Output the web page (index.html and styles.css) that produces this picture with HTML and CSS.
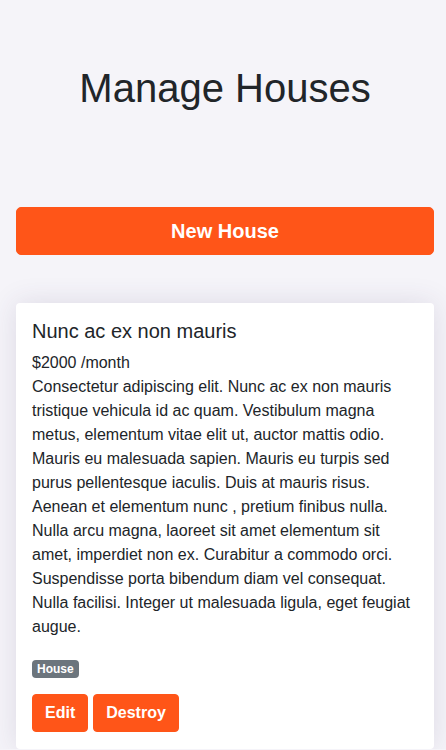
FILE: index.html
```html
<!DOCTYPE html>
<html>
<head>
<meta charset="utf-8">
<link rel="stylesheet" href="styles.css">
</head>
<body>
<main class="page">
  <h1 class="page-title">Manage Houses</h1>
  <a class="btn btn-lg btn-block" href="#">New House</a>
  <div class="card">
    <h5 class="card-title">Nunc ac ex non mauris</h5>
    <p class="card-text">$2000 /month<br>Consectetur adipiscing elit. Nunc ac ex non mauris tristique vehicula id ac quam. Vestibulum magna metus, elementum vitae elit ut, auctor mattis odio. Mauris eu malesuada sapien. Mauris eu turpis sed purus pellentesque iaculis. Duis at mauris risus. Aenean et elementum nunc , pretium finibus nulla. Nulla arcu magna, laoreet sit amet elementum sit amet, imperdiet non ex. Curabitur a commodo orci. Suspendisse porta bibendum diam vel consequat. Nulla facilisi. Integer ut malesuada ligula, eget feugiat augue.</p>
    <div class="tags"><span class="badge">House</span></div>
    <div class="actions">
      <a class="btn" href="#">Edit</a>
      <a class="btn" href="#">Destroy</a>
    </div>
  </div>
</main>
</body>
</html>
```
FILE: styles.css
```css
html, body {
  margin: 0;
  padding: 0;
  background: #f5f4f9;
}
body {
  font-family: "Liberation Sans", Arial, sans-serif;
  font-size: 16px;
  line-height: 1.5;
  color: #212529;
}
.page {
  padding: 64px 12px 0 16px;
}
.page-title {
  margin: 0 0 95px;
  font-size: 40px;
  font-weight: 400;
  line-height: 48px;
  text-align: center;
}
.btn {
  display: inline-block;
  background: #ff5518;
  border: 1px solid #ff5518;
  color: #fff;
  font-weight: 700;
  font-size: 16px;
  line-height: 24px;
  padding: 6px 12px;
  border-radius: 4px;
  text-decoration: none;
  text-align: center;
}
.btn-lg {
  font-size: 20px;
  line-height: 30px;
  padding: 8px 16px;
  border-radius: 5px;
}
.btn-block {
  display: block;
}
.card {
  margin-top: 48px;
  background: #fff;
  border-radius: 4px;
  padding: 16px 16px 17px;
  box-shadow: 0 0 28px rgba(60, 50, 90, 0.13);
}
.card-title {
  margin: 0 0 8px;
  font-size: 20px;
  font-weight: 400;
  line-height: 24px;
}
.card-text {
  margin: 0 0 21px;
}
.tags {
  display: flex;
  margin-bottom: 16px;
}
.badge {
  display: inline-block;
  background: #6c757d;
  color: #fff;
  font-size: 12px;
  font-weight: 700;
  line-height: 12px;
  padding: 3px 5px;
  border-radius: 4px;
}
.actions {
  display: flex;
  gap: 5px;
}
```
